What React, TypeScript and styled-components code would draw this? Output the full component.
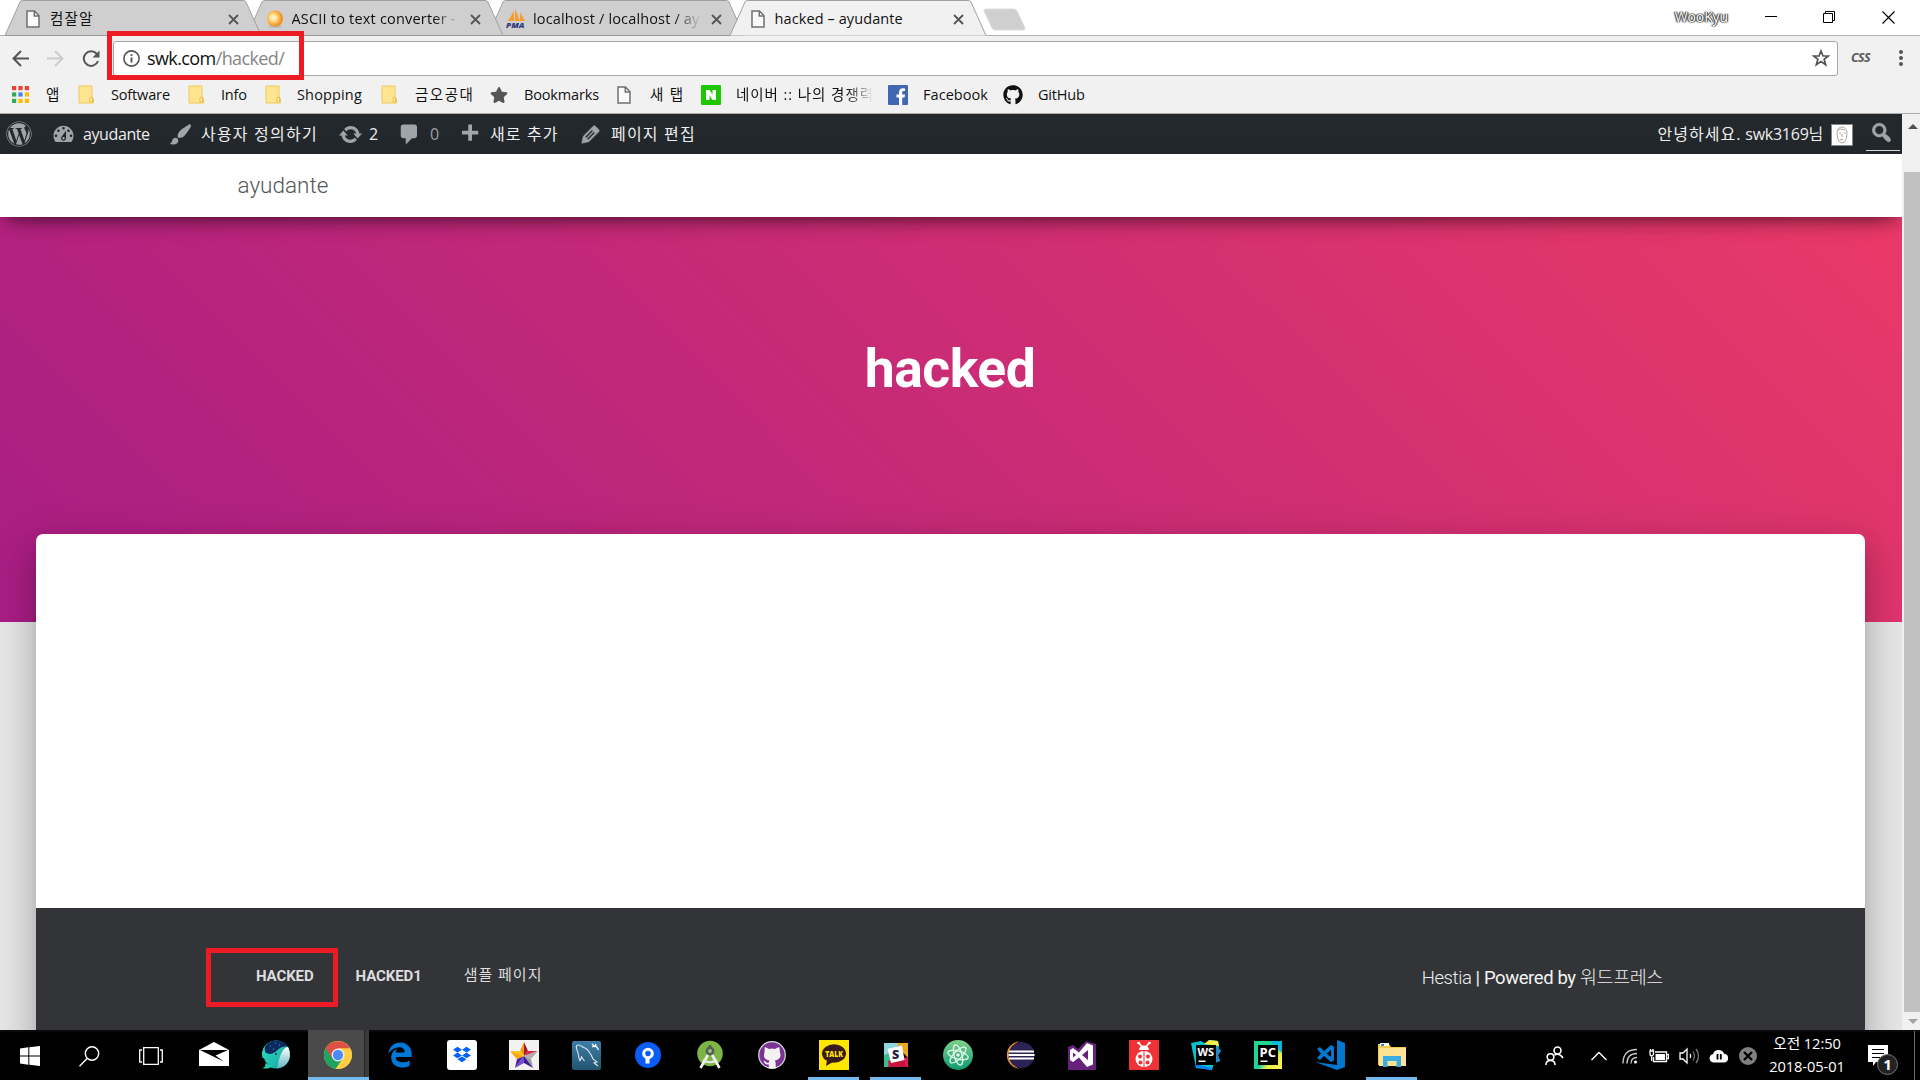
import React from "react";
import styled, { createGlobalStyle, css } from "styled-components";
import { FaWordpress, FaGithub, FaDropbox, FaStar } from "react-icons/fa";
import { FaEdgeLegacy } from "react-icons/fa6";

const UI = `"Open Sans", "Noto Sans CJK KR", sans-serif`;
const WEB = `Roboto, "Noto Sans CJK KR", sans-serif`;

const Global = createGlobalStyle`
  * { box-sizing: border-box; }
  body { margin: 0; overflow: hidden; font-family: ${UI}; }
  svg { display: block; flex: none; }
`;

const Screen = styled.div`
  position: relative;
  width: 1920px;
  height: 1080px;
  overflow: hidden;
  display: grid;
  grid-template-rows: 36px 40px 38px 916px 50px;
  background: #f1f1f1;
`;

const Label = styled.span<{ ls?: number; fade?: boolean; w?: number }>`
  white-space: nowrap;
  overflow: hidden;
  flex: none;
  letter-spacing: ${(p) => p.ls ?? 0}px;
  ${(p) => p.w && css`width: ${p.w}px;`}
  ${(p) => p.fade && css`mask-image: linear-gradient(90deg, #000 calc(100% - 26px), transparent 100%);`}
`;

/* ---------- tab strip ---------- */

const TabStrip = styled.header`
  display: flex;
  align-items: stretch;
  padding-left: 5px;
  background: linear-gradient(#b1b1b1, #b1b1b1) 0 35px / 100% 1px no-repeat, #fff;
`;

const TabBox = styled.div<{ z: number }>`
  position: relative;
  z-index: ${(p) => p.z};
  width: 256px;
  margin-right: -14.5px;
  height: 36px;
  display: flex;
  align-items: center;
  flex: none;
  padding: 1px 22px 0 17px;
  font-size: 14.5px;
  line-height: 36px;
  color: #111;
`;

const TabShape = styled.svg`
  position: absolute;
  inset: 0;
  z-index: -1;
`;

const TabIcon = styled.span`
  display: flex;
  justify-content: center;
  width: 22px;
  margin-right: 6px;
  flex: none;
`;

const TabClose = styled.span`
  margin-left: auto;
  margin-top: 1px;
`;

const NewTab = styled.svg`
  margin-left: 12px;
`;

const WindowControls = styled.div`
  margin-left: auto;
  display: flex;
  align-items: center;
  height: 34px;
  padding-right: 25px;
`;

const UserName = styled.span`
  font-size: 14px;
  color: #fff;
  text-shadow: 0 0 1px #333, 0 0 1px #333, 0 0 2px #333, 1px 0 1px #555, -1px 0 1px #555;
  margin-right: 37px;
  line-height: 32px;
  letter-spacing: -0.1px;
`;

const WinButton = styled.svg<{ gap: number }>`
  margin-right: ${(p) => p.gap}px;
`;

/* ---------- toolbar ---------- */

const Toolbar = styled.div`
  display: flex;
  align-items: center;
  padding: 5px 0 1px 12px;
`;

const NavIcons = styled.div`
  display: flex;
  gap: 18px;
  width: 101px;
`;

const Omnibox = styled.div`
  display: flex;
  align-items: center;
  width: 1725px;
  height: 35px;
  padding: 0 7px 0 9px;
  border: 1px solid #a6a6a6;
  border-radius: 3px;
  background: #fff;
  font-size: 18px;
  line-height: 32px;
  color: #111;
`;

const UrlText = styled.span`
  margin-left: 7px;
  flex: 1;
  letter-spacing: -0.6px;
  em { font-style: normal; color: #858585; }
`;

const CssBadge = styled.span`
  margin-left: 13px;
  width: 48px;
  font: italic 700 12.5px/30px "Noto Sans", sans-serif;
  letter-spacing: -0.6px;
  color: #5a5a5a;
`;

/* ---------- bookmarks ---------- */

const Bookmarks = styled.nav`
  display: flex;
  align-items: center;
  padding: 0 0 0 12px;
  border-bottom: 1px solid #a9abad;
  font-size: 14.5px;
  line-height: 36px;
  color: #111;
`;

const Bookmark = styled.div<{ w: number }>`
  display: flex;
  align-items: center;
  width: ${(p) => p.w}px;
  flex: none;
`;

const BookmarkIcon = styled.span<{ w: number }>`
  width: ${(p) => p.w}px;
  flex: none;
`;

/* ---------- page ---------- */

const Viewport = styled.div`
  display: grid;
  grid-template-columns: 1902px 18px;
  min-height: 0;
`;

const Page = styled.div`
  display: flex;
  flex-direction: column;
  background: #e5e5e5;
  overflow: hidden;
`;

const AdminBar = styled.div`
  display: flex;
  height: 40px;
  flex: none;
  padding-left: 6px;
  background: #23282d;
  color: #eee;
  font-size: 16px;
  line-height: 42px;
`;

const AdminItem = styled.div<{ w: number; gap: number; dim?: boolean }>`
  display: flex;
  align-items: center;
  width: ${(p) => p.w}px;
  gap: ${(p) => p.gap}px;
  flex: none;
  height: 40px;
  color: ${(p) => (p.dim ? "#9a9fa3" : "#eee")};
  svg { color: #a0a5aa; }
`;

const AdminRight = styled.div`
  margin-left: auto;
  display: flex;
  align-items: center;
  height: 40px;
`;

const Avatar = styled.span`
  display: grid;
  place-items: center;
  width: 22px;
  height: 22px;
  margin: 1px 13px 0 8px;
  border: 1px solid #82878c;
  background: #fff;
`;

const SearchBox = styled.span`
  width: 34px;
  height: 36px;
  margin: -2px 2px 0 0;
  padding: 5px 0 0 3px;
  border-bottom: 1px solid #ddd;
  color: #a0a5aa;
`;

const SiteHeader = styled.div`
  position: relative;
  z-index: 1;
  height: 63px;
  flex: none;
  padding-left: 237.500px;
  background: #fff;
  color: #555;
  font: 300 22.5px/62px ${WEB};
  box-shadow: 0 12px 25px -15px rgba(0, 0, 0, 0.42), 0 4px 25px 0 rgba(0, 0, 0, 0.12),
    0 10px 12px -6px rgba(0, 0, 0, 0.25);
`;

const Hero = styled.div`
  height: 405px;
  flex: none;
  background: linear-gradient(45deg, #a81d84 0%, #eb3a67 100%) 0 100% / 100% 468px no-repeat;
  text-align: center;
`;

const HeroTitle = styled.h1`
  margin: 0;
  padding: 122px 2px 0 0;
  color: #fff;
  font: 700 53.5px/60px ${WEB};
  letter-spacing: -0.5px;
`;

const Card = styled.main`
  flex: none;
  width: 1829px;
  height: 600px;
  margin: -88px 0 0 36px;
  border-radius: 7px;
  background: #fff;
  display: grid;
  grid-template-rows: 374px 1fr;
  box-shadow: 0 20px 30px 2px rgba(0, 0, 0, 0.14), 0 8px 38px 6px rgba(0, 0, 0, 0.12),
    0 10px 12px -6px rgba(0, 0, 0, 0.2);
`;

const Footer = styled.footer`
  grid-row: 2;
  display: flex;
  justify-content: space-between;
  padding: 50px 202px 0 220px;
  background: #323437;
  color: #f0f0f0;
  font-family: ${WEB};
`;

const FooterLinks = styled.div`
  display: flex;
  gap: 42px;
  font-size: 15px;
  font-weight: 700;
  line-height: 36px;
  color: #ddd;
  span:last-child { font-weight: 400; line-height: 34px; }
`;

const Credits = styled.div`
  font-size: 18.5px;
  line-height: 40px;
  color: #f4f4f4;
  letter-spacing: -0.4px;
  em { font-style: normal; font-weight: 300; color: #eee; }
`;

const ScrollTrack = styled.div`
  display: flex;
  flex-direction: column;
  align-items: flex-end;
  background: #f1f1f1;
`;

const ScrollButton = styled.div<{ h: number; down?: boolean }>`
  display: flex;
  align-items: center;
  justify-content: center;
  width: 15px;
  height: ${(p) => p.h}px;
  &::before {
    content: "";
    border: 5px solid transparent;
    ${(p) => (p.down ? "border-top-color: #a3a3a3; border-bottom: 0;" : "border-bottom-color: #505050; border-top: 0;")}
  }
`;

const ScrollThumb = styled.div`
  width: 16px;
  height: 840px;
  margin-top: 34px;
  background: #c1c1c1;
`;

const RedFrame = styled.div<{ x: number; y: number; w: number; h: number }>`
  position: absolute;
  z-index: 10;
  left: ${(p) => p.x}px;
  top: ${(p) => p.y}px;
  width: ${(p) => p.w}px;
  height: ${(p) => p.h}px;
  border: 5px solid #ed1c24;
`;

/* ---------- taskbar ---------- */

const Taskbar = styled.footer`
  display: flex;
  background: #000;
  border-top: 2px solid #0a0a0a;
  color: #fff;
`;

const SystemButtons = styled.div`
  display: flex;
  align-items: center;
  width: 183px;
  padding-left: 20px;
  gap: 39px;
`;

const AppCell = styled.div<{ active?: boolean; running?: boolean }>`
  display: flex;
  align-items: center;
  justify-content: center;
  width: 62px;
  height: 50px;
  margin-top: -2px;
  flex: none;
  ${(p) => p.running && css`background: linear-gradient(#76b9ed, #76b9ed) 5px 47px / 51px 3px no-repeat;`}
  ${(p) => p.active && css`
    background: linear-gradient(#76b9ed, #76b9ed) 1px 47px / 61px 3px no-repeat,
      linear-gradient(90deg, transparent 1px, #4a4a4a 1px 57px, #222 57px 58px, #3a3a3a 58px);
  `}
`;

const Tray = styled.div`
  display: flex;
  align-items: center;
  margin-left: auto;
`;

const TrayIcon = styled.svg<{ gap: number }>`
  margin-right: ${(p) => p.gap}px;
`;

const Clock = styled.div`
  width: 76px;
  text-align: center;
  font-size: 14.7px;
  line-height: 23px;
  letter-spacing: -0.1px;
  white-space: nowrap;
  margin-top: -3px;
`;

const ShowDesktop = styled.div`
  width: 6px;
  height: 50px;
  margin-left: 14px;
  border-left: 1px solid #666;
`;

/* ---------- small drawings ---------- */

const Cross = () => (
  <svg width="11" height="11" viewBox="0 0 11 11" stroke="#555" strokeWidth="1.8">
    <path d="M1 1l9 9M10 1l-9 9" />
  </svg>
);

const FileIcon = () => (
  <svg width="14" height="18" viewBox="0 0 14 18" fill="#fafafa" stroke="#707070" strokeWidth="1.5">
    <path d="M1 1h7.5L13 5.8V17H1z" />
    <path d="M8.3 1v5H13" fill="none" />
  </svg>
);

const Folder = () => (
  <svg width="16" height="19" viewBox="0 0 16 19">
    <path d="M1 1h13v11l1.5 1.5V18H1z" fill="#ffe58f" stroke="#efc95c" />
    <path d="M12 17v-4.5h2.5V17z" fill="#fff0b5" stroke="#e9bd48" />
  </svg>
);

const AppsIcon = () => {
  const colors = ["#ea4335", "#ea4335", "#ea4335", "#34a853", "#4285f4", "#fbbc05", "#34a853", "#fbbc05", "#fbbc05"];
  return (
    <svg width="17" height="17" viewBox="0 0 17 17">
      {colors.map((c, i) => (
        <rect key={i} x={(i % 3) * 6.4} y={Math.floor(i / 3) * 6.4} width="4.2" height="4.2" fill={c} />
      ))}
    </svg>
  );
};

const BallIcon = () => (
  <svg width="18" height="18" viewBox="0 0 18 18">
    <defs>
      <radialGradient id="ball" cx=".4" cy=".45" r=".6">
        <stop offset="0" stopColor="#fffbe0" />
        <stop offset=".35" stopColor="#ffdf90" />
        <stop offset=".75" stopColor="#f8a22c" />
        <stop offset="1" stopColor="#e8851c" />
      </radialGradient>
    </defs>
    <ellipse cx="9" cy="16.5" rx="7" ry="1.3" fill="#b8b8b8" />
    <circle cx="9" cy="8.5" r="8" fill="url(#ball)" />
  </svg>
);

const PmaIcon = () => (
  <svg width="20" height="20" viewBox="0 0 20 20">
    <path d="M2 12L8 2v10zM9 12V0l5 12zM14 12V3l5 9z" fill="#f89c2c" />
    <text x="0" y="18.500" fontFamily="Open Sans, sans-serif" fontWeight="800" fontStyle="italic" fontSize="7.500" textLength="18.500" lengthAdjust="spacingAndGlyphs" fill="#333b78">PMA</text>
  </svg>
);

const NaverIcon = () => (
  <svg width="20" height="20" viewBox="0 0 20 20">
    <rect width="20" height="20" rx="1" fill="#1ec800" />
    <path d="M5 5h3.5l3 4.600V5H15v10h-3.500l-3-4.600V15H5z" fill="#fff" />
  </svg>
);

const FacebookIcon = () => (
  <svg width="20" height="20" viewBox="0 0 20 20">
    <rect width="20" height="20" rx="1" fill="#4267b2" />
    <path d="M11 20v-7.500H8.500V9.500H11V7.300C11 4.700 12.500 3.300 15 3.300l2 .1v2.700h-1.400c-1.200 0-1.400.6-1.400 1.500v1.900h2.800l-.4 3h-2.400V20z" fill="#fff" />
  </svg>
);

const dash = {
  gauge:
    "M3.76 16h12.48c1.1-1.37 1.76-3.11 1.76-5 0-4.42-3.58-8-8-8s-8 3.58-8 8c0 1.89.66 3.63 1.76 5zM10 4c.55 0 1 .45 1 1s-.45 1-1 1-1-.45-1-1 .45-1 1-1zM6 6c.55 0 1 .45 1 1s-.45 1-1 1-1-.45-1-1 .45-1 1-1zm8 0c.55 0 1 .45 1 1s-.45 1-1 1-1-.45-1-1 .45-1 1-1zm-5.37 5.55L12 7v6c0 1.1-.9 2-2 2s-2-.9-2-2c0-.57.24-1.08.63-1.45zM4 10c.55 0 1 .45 1 1s-.45 1-1 1-1-.45-1-1 .45-1 1-1zm12 0c.55 0 1 .45 1 1s-.45 1-1 1-1-.45-1-1 .45-1 1-1zm-5 3c0-.55-.45-1-1-1s-1 .45-1 1 .45 1 1 1 1-.45 1-1z",
  brush:
    "M18.33 3.57s.27-.8-.31-1.36c-.53-.52-1.22-.24-1.22-.24-.61.3-5.76 3.47-7.67 5.57-.86.96-2.06 3.79-1.09 4.82.92.98 3.96-.17 4.79-1 2.06-2.06 5.21-7.17 5.5-7.79zM1.4 17.65c2.37-1.56 1.46-3.41 3.23-4.64.93-.65 2.22-.62 3.08.29.63.67.8 2.57-.16 3.46-1.57 1.45-4 1.55-6.15.89z",
  update:
    "M10.2 3.28c3.53 0 6.43 2.61 6.92 6h2.08l-3.5 4-3.5-4h2.32c-.45-1.97-2.21-3.45-4.32-3.45-1.45 0-2.73.71-3.54 1.78L4.95 5.66C6.23 4.2 8.11 3.28 10.2 3.28zm-.4 13.44c-3.52 0-6.43-2.61-6.92-6H.8l3.5-4c1.17 1.33 2.33 2.67 3.5 4H5.48c.45 1.97 2.21 3.45 4.32 3.45 1.45 0 2.73-.71 3.54-1.78l1.71 1.95c-1.28 1.46-3.15 2.38-5.25 2.38z",
  comment: "M5 2h9c1.1 0 2 .9 2 2v7c0 1.1-.9 2-2 2h-2l-5 5v-5H5c-1.1 0-2-.9-2-2V4c0-1.1.9-2 2-2z",
  plus: "M17 7v3h-5v5H9v-5H4V7h5V2h3v5h5z",
  edit:
    "M13.89 3.39l2.71 2.72c.46.46.42 1.24.03 1.64l-8.01 8.02-5.56 1.16 1.16-5.58s7.6-7.63 7.99-8.03c.39-.39 1.22-.39 1.68.07zm-2.73 2.79l-5.59 5.61 1.11 1.11 5.54-5.65zm-2.97 8.23l5.58-5.6-1.07-1.08-5.59 5.6z",
  search:
    "M12.14 4.18c1.87 1.87 2.11 4.75.72 6.89.12.1.22.21.36.31.2.16.47.36.81.59.34.24.56.39.66.47.42.31.73.57.94.78.32.32.6.65.84 1 .25.35.44.69.59 1.04.14.35.21.68.18 1-.02.32-.14.59-.36.81s-.49.34-.81.36c-.31.02-.65-.04-.99-.19-.35-.14-.7-.34-1.04-.59-.35-.24-.68-.52-1-.84-.21-.21-.47-.52-.77-.93-.1-.13-.25-.35-.47-.66-.22-.32-.4-.57-.56-.78-.16-.2-.29-.35-.44-.5-2.07 1.09-4.69.76-6.44-.98-2.14-2.15-2.14-5.64 0-7.78 2.15-2.15 5.63-2.15 7.78 0zm-1.41 6.36c1.36-1.37 1.36-3.58 0-4.95-1.37-1.37-3.59-1.37-4.95 0-1.37 1.37-1.37 3.58 0 4.95 1.36 1.37 3.58 1.37 4.95 0z",
};

const heavy = ["search", "edit"];

const Dashicon = ({ name }: { name: keyof typeof dash }) => (
  <svg width="25" height="25" viewBox="0 0 20 20" fill="currentColor" stroke="currentColor" strokeWidth={heavy.includes(name) ? 0.5 : 0}>
    <path fillRule="evenodd" d={dash[name]} />
  </svg>
);

/* ---------- taskbar app icons (30 × 30) ---------- */

const App30 = ({ children }: { children: React.ReactNode }) => (
  <svg width="30" height="30" viewBox="0 0 30 30">{children}</svg>
);

const MailApp = () => (
  <App30>
    <path d="M0 10L15 2l15 8v16H0z" fill="#fff" />
    <path d="M1 10h28L16.500 15.500l8.500 6.300L1 10z" fill="#000" />
  </App30>
);

const WhaleApp = () => (
  <App30>
    <defs>
      <linearGradient id="whale" x1="0" y1="0" x2="1" y2="1">
        <stop offset="0" stopColor="#30e8c0" />
        <stop offset="1" stopColor="#159aa5" />
      </linearGradient>
      <linearGradient id="belly" x1="0" y1="0" x2="0" y2="1">
        <stop offset="0" stopColor="#fff" />
        <stop offset="1" stopColor="#5fb6c0" />
      </linearGradient>
    </defs>
    <circle cx="15" cy="14.500" r="14" fill="url(#whale)" />
    <path d="M4 11C2 5 9 .5 15 .5c6 0 10 2 12 6-4 0-7 0-11 4-3 3-7 4-9 3-2-.4-3-1-3-2.500z" fill="#0c2a5e" />
    <path d="M27 7c4 8 2 20-11 21.500 1-4 1-7 3-12 2-5 4-9 8-9.500z" fill="url(#belly)" />
    <path d="M0 18h3c1 4 3 6 6 8l2 4H0z" fill="#000" />
    <path d="M1 28c3 0 4-3 3-5l7 3c-2 3-7 3-10 2z" fill="#27cdb3" />
    <circle cx="15" cy="14" r="1" fill="#0c2a5e" />
    <path d="M9 6h1M14 3h1M18 5h1M12 9h1" stroke="#4a90c8" />
  </App30>
);

const ChromeApp = () => (
  <svg width="28" height="28" viewBox="0 0 48 48">
    <circle cx="24" cy="24" r="24" fill="#ffce44" />
    <path d="M24 24L3.200 12A24 24 0 0 0 20 47.700L32 29z" fill="#1da362" />
    <path d="M24 13h20.800A24 24 0 0 0 3.200 12L14 30z" fill="#dd5144" />
    <path d="M20 47.700L32 31l-8-7-10 5z" fill="#1da362" />
    <path d="M34 19l-2 12-12 16.700A24 24 0 0 0 44.800 13H24z" fill="#ffce44" />
    <circle cx="24" cy="24" r="11" fill="#f1f1f1" />
    <circle cx="24" cy="24" r="8.800" fill="#4c8bf5" />
  </svg>
);

const DropboxApp = () => (
  <App30>
    <rect width="30" height="30" rx="3" fill="#fff" />
    <g transform="translate(6 5.500)"><FaDropbox size={18} color="#0061fe" /></g>
  </App30>
);

const StarApp = () => (
  <App30>
    <rect width="30" height="30" fill="#f4f2f0" />
    <path d="M15 16V2l-4 9z" fill="#e8a20c" />
    <path d="M15 16V2l4 9z" fill="#a8172f" />
    <path d="M15 16l4-5 10 0z" fill="#d8304c" />
    <path d="M15 16l14-5-7 8z" fill="#b0b0b0" />
    <path d="M15 16l7 3 2 9z" fill="#9c9c9c" />
    <path d="M15 16l9 12-9-5z" fill="#3a1c90" />
    <path d="M15 16v7l-9 5z" fill="#7a48d8" />
    <path d="M15 16L6 28l2-9z" fill="#4b2499" />
    <path d="M15 16l-7 3-7-8z" fill="#f7a400" />
    <path d="M15 16L1 11h10z" fill="#ffc21c" />
  </App30>
);

const MysqlApp = () => (
  <svg width="29" height="29" viewBox="0 0 29 29">
    <defs>
      <linearGradient id="mysql" x1="0" y1="0" x2="0" y2="1">
        <stop offset="0" stopColor="#3d7ea6" />
        <stop offset="1" stopColor="#23546f" />
      </linearGradient>
    </defs>
    <rect width="29" height="29" rx="2" fill="url(#mysql)" />
    <path d="M8 20c-2-4-1-7-3-11-1-3-1-5 1-5 3 0 4 2 7 3 4 2 6 6 8 11l4 3-3 1 4 3M8 20l1.500-4 3 4" fill="none" stroke="#dce8ee" strokeWidth="1.100" />
    <path d="M20 3l2.500 2.500h2l2 3.500M24 3l-1.500 3M20 6l3-1" fill="none" stroke="#fff" strokeWidth="1.300" />
  </svg>
);

const SourcetreeApp = () => (
  <svg width="26" height="26" viewBox="0 0 26 26">
    <circle cx="13" cy="13" r="13" fill="#0b5cf5" />
    <circle cx="13" cy="11.500" r="4.300" fill="none" stroke="#fff" strokeWidth="3" />
    <rect x="10.500" y="15.500" width="4" height="6" fill="#fff" />
  </svg>
);

const AndroidStudioApp = () => (
  <App30>
    <circle cx="15" cy="13.500" r="12.800" fill="#7db544" />
    <path d="M5.500 28L14 13M24.500 28L16 13" stroke="#f1f1f1" strokeWidth="2.600" />
    <path d="M8 20c4 3 10 3 14 0" fill="none" stroke="#e9e9e9" strokeWidth="2.200" />
    <circle cx="15" cy="11" r="3.200" fill="#9bbf7c" stroke="#546052" strokeWidth="2.500" />
    <path d="M15 5v3" stroke="#546052" strokeWidth="2.500" />
  </App30>
);

const GithubDesktopApp = () => (
  <App30>
    <circle cx="15" cy="15" r="13.300" fill="#7b3494" stroke="#ddd" strokeWidth="1.200" />
    <path d="M8 7l4 2q3-.8 6 0l4-2c1 2 .8 4 .8 5 2.500 6-2 8-5 8.500 1.200 2 1 4 1 8h-7v-4c-3 .5-4-1-5-3-1-1 1-1 2 .2 1 1.500 2 1.200 3 1 0-1 .2-1.600.8-2.200-4-.5-7-3-5-8.500 0-1-.2-3 .4-5z" fill="#f2f2f2" />
  </App30>
);

const KakaoApp = () => (
  <App30>
    <rect width="30" height="30" fill="#ffe600" />
    <ellipse cx="15" cy="13.500" rx="12" ry="9.300" fill="#391b1b" />
    <path d="M8 20l-1 6 7-4z" fill="#391b1b" />
    <text x="6.300" y="16.600" fontFamily="Open Sans, sans-serif" fontWeight="800" fontSize="8" textLength="17.500" lengthAdjust="spacingAndGlyphs" fill="#ffe600">TALK</text>
  </App30>
);

const SlackApp = () => (
  <svg width="24" height="24" viewBox="0 0 24 24">
    <path d="M0 0h13l-8 24H0z" fill="#3eb991" />
    <path d="M0 0h14v7L0 12z" fill="#8fd5dc" />
    <path d="M13 0h11v15L15 5z" fill="#e9a820" />
    <path d="M24 14v10H4l1-6z" fill="#e01765" />
    <path d="M4 18l16-4 2 10H6z" fill="#c9143b" />
    <path d="M3.500 6L18 2.500l2.500 14.500L7 20z" fill="#fff" />
    <text x="8" y="16" fontFamily="Open Sans, sans-serif" fontWeight="800" fontSize="12.500" fill="#2a2340">S</text>
  </svg>
);

const AtomApp = () => (
  <App30>
    <defs>
      <linearGradient id="atom" x1="0" y1="0" x2="0" y2="1">
        <stop offset="0" stopColor="#7fd08a" />
        <stop offset="1" stopColor="#0c9c74" />
      </linearGradient>
    </defs>
    <circle cx="15" cy="15" r="15" fill="url(#atom)" />
    <g fill="none" stroke="#e3f5e8" strokeWidth="1.300">
      <ellipse cx="15" cy="15" rx="10.500" ry="4" transform="rotate(15 15 15)" />
      <ellipse cx="15" cy="15" rx="10.500" ry="4" transform="rotate(75 15 15)" />
      <ellipse cx="15" cy="15" rx="10.500" ry="4" transform="rotate(135 15 15)" />
    </g>
    <circle cx="15" cy="15" r="1.800" fill="#e3f5e8" />
  </App30>
);

const EclipseApp = () => (
  <App30>
    <path d="M14 1.300A13.800 13.800 0 0 0 14 28.700 15.500 15.500 0 0 1 14 1.300z" fill="#f7941e" />
    <circle cx="16.500" cy="15" r="13" fill="#2c2255" />
    <path d="M4 11.500h25M3.500 15h26M4 18.500h25" stroke="#fff" strokeWidth="1.800" />
  </App30>
);

const VisualStudioApp = () => (
  <svg width="28" height="30" viewBox="0 0 28 30">
    <path d="M0 7l5-2 5 4 8-8 10 3v26H0z" fill="#68217a" />
    <path fillRule="evenodd" d="M2 10l3-2 6 4.500L19 3l6 2.500v19L19 27l-8-9.500L5 22l-3-2zm3 2.500v5L8 15zM20 10l-6 5 6 5z" fill="#fff" />
  </svg>
);

const BugApp = () => (
  <App30>
    <rect width="30" height="30" fill="#ef3237" />
    <path d="M10 3l3 4M20 3l-3 4" stroke="#fff" strokeWidth="1.500" />
    <circle cx="9.500" cy="3" r="1.300" fill="#fff" />
    <circle cx="20.500" cy="3" r="1.300" fill="#fff" />
    <path d="M10 10a5 4.500 0 0 1 10 0z" fill="#fff" />
    <ellipse cx="15" cy="19" rx="8.500" ry="8" fill="#fff" />
    <path d="M15 11v16M7 16l-1-3M23 16l1-3M7 23l-2 2M23 23l2 2" stroke="#ef3237" strokeWidth="1" />
    <circle cx="11" cy="16.500" r="2" fill="#ef3237" />
    <circle cx="19" cy="16.500" r="2" fill="#ef3237" />
    <circle cx="11.500" cy="22.500" r="2" fill="#ef3237" />
    <circle cx="18.500" cy="22.500" r="2" fill="#ef3237" />
  </App30>
);

const WebStormApp = () => (
  <App30>
    <path d="M0 3l10-2 5 3 4-4 8 1 1 8 2 2-3 4 2 6-6 2-2 7-16-2z" fill="#07c3d0" />
    <path d="M13 4l5-4 9 1 1 5z" fill="#f7ee4c" />
    <path d="M4 24l17 4-2 2-14-3z" fill="#087cfa" />
    <path d="M24 6l6 4-3 5 2 6-5 2z" fill="#2489c8" />
    <rect x="5" y="5" width="20" height="20" fill="#000" />
    <text x="6.500" y="16" fontFamily="Open Sans, sans-serif" fontWeight="700" fontSize="11" textLength="16.500" lengthAdjust="spacingAndGlyphs" fill="#fff">WS</text>
    <rect x="7.500" y="20.500" width="7" height="1.500" fill="#fff" />
  </App30>
);

const PyCharmApp = () => (
  <svg width="28" height="28" viewBox="0 0 28 28">
    <defs>
      <linearGradient id="pc" x1="0" y1="0" x2="1" y2="1">
        <stop offset="0" stopColor="#21d789" />
        <stop offset=".55" stopColor="#1fd19b" />
        <stop offset=".7" stopColor="#e8ee4a" />
        <stop offset="1" stopColor="#fcf84a" />
      </linearGradient>
    </defs>
    <rect width="28" height="28" fill="url(#pc)" />
    <path d="M16 0h12v12z" fill="#08b9dd" />
    <rect x="4" y="4" width="20" height="20" fill="#000" />
    <text x="5.500" y="15.500" fontFamily="Open Sans, sans-serif" fontWeight="700" fontSize="12" textLength="16.500" lengthAdjust="spacingAndGlyphs" fill="#fff">PC</text>
    <rect x="6.500" y="19.500" width="7" height="1.500" fill="#fff" />
  </svg>
);

const VsCodeApp = () => (
  <App30>
    <path d="M22 0l8 3v24l-8 3L0 22l22 3z" fill="#0078d0" />
    <path fillRule="evenodd" d="M2 9l3-2 4 4 7-6 3 1.500v14L16 22l-7-6-4 4-3-2 4-4.500zm14 1l-4.500 3.500L16 17z" fill="#0078d0" />
    <path d="M19.500 5h2.500v19h-2.500z" fill="#000" />
  </App30>
);

const ExplorerApp = () => (
  <svg width="28" height="26" viewBox="0 0 28 26">
    <path d="M0 2h11l2 3h15v18H0z" fill="#f5c94b" />
    <path d="M1 6h27v18H1z" fill="#ffe394" />
    <path d="M2 1h9v3H2z" fill="#fff" />
    <path d="M3 2h3v2H3z" fill="#2a8fd0" />
    <path d="M5 25V14h18v11h-4.500v-6h-9v6z" fill="#38ace0" />
  </svg>
);

const apps: { icon: React.ReactNode; active?: boolean; running?: boolean }[] = [
  { icon: <MailApp /> },
  { icon: <WhaleApp /> },
  { icon: <ChromeApp />, active: true },
  { icon: <FaEdgeLegacy size={26} color="#0078d7" /> },
  { icon: <DropboxApp /> },
  { icon: <StarApp /> },
  { icon: <MysqlApp /> },
  { icon: <SourcetreeApp /> },
  { icon: <AndroidStudioApp /> },
  { icon: <GithubDesktopApp /> },
  { icon: <KakaoApp />, running: true },
  { icon: <SlackApp />, running: true },
  { icon: <AtomApp /> },
  { icon: <EclipseApp /> },
  { icon: <VisualStudioApp /> },
  { icon: <BugApp /> },
  { icon: <WebStormApp /> },
  { icon: <PyCharmApp /> },
  { icon: <VsCodeApp /> },
  { icon: <ExplorerApp />, running: true },
];

const tabs = [
  { title: "컴잘알", icon: <FileIcon />, w: 160, z: 4, ls: 1.1 },
  { title: "ASCII to text converter - ", icon: <BallIcon />, w: 168, z: 3, ls: 0.2 },
  { title: "localhost / localhost / ay", icon: <PmaIcon />, w: 168, z: 2, ls: 0.15 },
  { title: "hacked – ayudante", icon: <FileIcon />, w: 168, z: 5, ls: 0.1, current: true },
];

const bookmarks = [
  { title: "앱", icon: <AppsIcon />, iw: 34, w: 66, ls: 0 },
  { title: "Software", icon: <Folder />, iw: 33, w: 110, ls: -0.15 },
  { title: "Info", icon: <Folder />, iw: 33, w: 77, ls: -0.2 },
  { title: "Shopping", icon: <Folder />, iw: 32, w: 116, ls: 0.15 },
  { title: "금오공대", icon: <Folder />, iw: 34, w: 109, ls: 1.5 },
  { title: "Bookmarks", icon: <FaStar size={18} color="#555" />, iw: 34, w: 127, ls: -0.15 },
  { title: "새 탭", icon: <FileIcon />, iw: 33, w: 84, ls: 1.3 },
  { title: "네이버 :: 나의 경쟁력", icon: <NaverIcon />, iw: 35, w: 187, ls: 0.95, cut: 137 },
  { title: "Facebook", icon: <FacebookIcon />, iw: 35, w: 115, ls: 0.05 },
  { title: "GitHub", icon: <FaGithub size={20} color="#111" />, iw: 35, w: 100, ls: -0.2 },
];

export default function App() {
  return (
    <Screen>
      <Global />
      <TabStrip>
        {tabs.map((t) => (
          <TabBox key={t.title} z={t.z}>
            <TabShape width="256" height="36" viewBox="0 0 256 36">
              <path
                d="M0 35.500L15 2Q16 .5 18 .5H238Q240 .5 241 2L256 35.500"
                fill={t.current ? "#f1f1f1" : "#cfcfcf"}
                stroke="#a0a0a0"
              />
              {!t.current && <path d="M0 35.500H256" stroke="#999" />}
            </TabShape>
            <TabIcon>{t.icon}</TabIcon>
            <Label ls={t.ls} w={t.w} fade={t.z < 4}>{t.title}</Label>
            <TabClose><Cross /></TabClose>
          </TabBox>
        ))}
        <NewTab width="44" height="32" viewBox="0 0 44 32">
          <path d="M2 9h29q2 0 3 2l8 17q0 2-2 2H12q-2 0-3-2L1 11q0-2 1-2z" fill="#cfcfcf" stroke="#ddd" />
        </NewTab>
        <WindowControls>
          <UserName>WooKyu</UserName>
          <WinButton gap={46} width="12" height="12" stroke="#000"><path d="M0 5.500h12" /></WinButton>
          <WinButton gap={47} width="12" height="12" stroke="#000" fill="none">
            <path d="M.5 2.500h9v9h-9zM2.500 2V.5h9v9H10" />
          </WinButton>
          <WinButton gap={0} width="13" height="13" stroke="#000" strokeWidth="1.200"><path d="M.5 .5l12 12M12.500 .5l-12 12" /></WinButton>
        </WindowControls>
      </TabStrip>

      <Toolbar>
        <NavIcons>
          <svg width="17" height="17" viewBox="0 0 17 17" fill="none" stroke="#555" strokeWidth="2"><path d="M17 8.500H2M9 1L1.500 8.500 9 16" /></svg>
          <svg width="17" height="17" viewBox="0 0 17 17" fill="none" stroke="#ccc" strokeWidth="2"><path d="M0 8.500h15M8 1l7.500 7.500L8 16" /></svg>
          <svg width="18" height="17" viewBox="0 0 18 17" fill="none" stroke="#555" strokeWidth="2">
            <path d="M14.800 4A7.300 7.300 0 1 0 16 11" />
            <path d="M17.500 .5v7h-7z" fill="#555" stroke="none" />
          </svg>
        </NavIcons>
        <Omnibox>
          <svg width="17" height="17" viewBox="0 0 17 17" fill="none" stroke="#555" strokeWidth="1.600">
            <circle cx="8.500" cy="8.500" r="7.600" />
            <path d="M8.500 7.500v5M8.500 4.300v1.800" strokeWidth="1.900" />
          </svg>
          <UrlText>swk.com<em>/hacked/</em></UrlText>
          <svg width="18" height="18" viewBox="0 0 18 18" fill="none" stroke="#555" strokeWidth="1.700">
            <path d="M9 2l2 5h5.300l-4.200 3.300 1.600 5.400L9 12.500l-4.700 3.200 1.600-5.400L1.700 7H7z" />
          </svg>
        </Omnibox>
        <CssBadge>CSS</CssBadge>
        <svg width="4" height="18" viewBox="0 0 4 18" fill="#555">
          <circle cx="2" cy="3" r="2" /><circle cx="2" cy="9" r="2" /><circle cx="2" cy="15" r="2" />
        </svg>
      </Toolbar>

      <Bookmarks>
        {bookmarks.map((b) => (
          <Bookmark key={b.title} w={b.w}>
            <BookmarkIcon w={b.iw}>{b.icon}</BookmarkIcon>
            <Label ls={b.ls} w={b.cut} fade={!!b.cut}>{b.title}</Label>
          </Bookmark>
        ))}
      </Bookmarks>

      <Viewport>
        <Page>
          <AdminBar>
            <AdminItem w={45} gap={0}><FaWordpress size={26} /></AdminItem>
            <AdminItem w={117} gap={7}><Dashicon name="gauge" /><Label ls={-0.4}>ayudante</Label></AdminItem>
            <AdminItem w={170} gap={8}><Dashicon name="brush" /><Label ls={1.2}>사용자 정의하기</Label></AdminItem>
            <AdminItem w={59} gap={6}><Dashicon name="update" /><Label>2</Label></AdminItem>
            <AdminItem w={60} gap={8} dim><Dashicon name="comment" /><Label>0</Label></AdminItem>
            <AdminItem w={121} gap={8}><Dashicon name="plus" /><Label ls={1.1}>새로 추가</Label></AdminItem>
            <AdminItem w={140} gap={8}><Dashicon name="edit" /><Label ls={1.2}>페이지 편집</Label></AdminItem>
            <AdminRight>
              <Label ls={1}>안녕하세요. </Label>
              <Label ls={-0.25}>&nbsp;swk3169님</Label>
              <Avatar>
                <svg width="14" height="18" viewBox="0 0 14 18" fill="none" stroke="#aaa">
                  <path d="M2 6Q3 1 7 1t5 5l-.5 6Q10 17 7 17T2.500 12zM4 7h2M8.500 7h2M7 8v3M5 13.500h3M3 4l3-1 4 1" />
                </svg>
              </Avatar>
              <SearchBox><Dashicon name="search" /></SearchBox>
            </AdminRight>
          </AdminBar>
          <SiteHeader>ayudante</SiteHeader>
          <Hero><HeroTitle>hacked</HeroTitle></Hero>
          <Card>
            <Footer>
              <FooterLinks>
                <Label ls={-0.1}>HACKED</Label>
                <Label ls={-0.1}>HACKED1</Label>
                <Label ls={1}>샘플 페이지</Label>
              </FooterLinks>
              <Credits><em>Hestia</em> | Powered by <em>워드프레스</em></Credits>
            </Footer>
          </Card>
        </Page>
        <ScrollTrack>
          <ScrollButton h={24} />
          <ScrollThumb />
          <ScrollButton h={18} down />
        </ScrollTrack>
      </Viewport>

      <Taskbar>
        <SystemButtons>
          <svg width="20" height="20" viewBox="0 0 20 20" fill="#fff">
            <path d="M0 2.500l8.300-1.200v8.200H0zM9.300 1.200L20 0v9.500H9.300zM0 10.500h8.300v8.200L0 17.500zM9.300 10.500H20V20L9.300 18.800z" />
          </svg>
          <svg width="21" height="21" viewBox="0 0 21 21" fill="none" stroke="#fff" strokeWidth="1.400">
            <circle cx="13" cy="7.500" r="6.700" /><path d="M8.300 12.300L.5 20.300" />
          </svg>
          <svg width="24" height="18" viewBox="0 0 24 18" fill="none" stroke="#fff" strokeWidth="1.300">
            <path d="M4.700 .7h14.600v16.600H4.700zM3 3H.7v12H3M21 3h2.300v12H21" />
          </svg>
        </SystemButtons>
        {apps.map((a, i) => (
          <AppCell key={i} active={a.active} running={a.running}>{a.icon}</AppCell>
        ))}
        <Tray>
          <TrayIcon gap={27} width="19" height="20" viewBox="0 0 19 20" fill="none" stroke="#fff" strokeWidth="1.600">
            <circle cx="12.500" cy="4.500" r="3.500" /><circle cx="5.500" cy="11" r="3.300" />
            <path d="M1 19q0-4.500 4.500-4.500T10 19M9.500 9q5-2.500 8.500 3" />
          </TrayIcon>
          <TrayIcon gap={15} width="16" height="10" fill="none" stroke="#fff" strokeWidth="1.400"><path d="M.5 9L8 1.500 15.500 9" /></TrayIcon>
          <TrayIcon gap={11} width="16" height="16" fill="none" strokeWidth="1.300">
            <path d="M1 15.500Q1 1.500 15 1.500M5 15.500Q5 5.500 15 5.500M9 15.500Q9 9.500 15 9.500" stroke="#ccc" />
            <circle cx="13.500" cy="14" r="1.500" fill="#fff" />
          </TrayIcon>
          <TrayIcon gap={10} width="20" height="15" fill="none" stroke="#fff" strokeWidth="1.300">
            <path d="M6 3h11.500v9.500H4.500V8M18 5.500h1.500v4H18" /><path d="M6.500 5H16v6H6.500z" fill="#fff" stroke="none" />
            <path d="M1 2v3q0 2 1.500 2T4.500 5V2zM1.500 0v2M4 0v2M2.700 7v5" />
          </TrayIcon>
          <TrayIcon gap={9} width="21" height="18" fill="none" stroke="#fff" strokeWidth="1.300">
            <path d="M1 6h3l4-4v14l-4-4H1z" /><path d="M11 7q1.500 2 0 4" /><path d="M14 4.500q3 4.500 0 9M17 2q5 7 0 14" stroke="#777" />
          </TrayIcon>
          <TrayIcon gap={10} width="20" height="14" viewBox="0 0 20 14">
            <path d="M4.500 13.500a4.200 4.200 0 0 1-.6-8.300A6 6 0 0 1 15.200 4.800a4.400 4.400 0 0 1 .3 8.700z" fill="#fff" />
            <path d="M8.500 5v5.500M11.800 5v5.500" stroke="#000" strokeWidth="1.800" />
          </TrayIcon>
          <TrayIcon gap={12} width="18" height="18"><circle cx="9" cy="9" r="9" fill="#808080" /><path d="M5 5l8 8M13 5l-8 8" stroke="#000" strokeWidth="2.200" /></TrayIcon>
          <Clock>오전 12:50<br />2018-05-01</Clock>
          <TrayIcon gap={1} width="54" height="40" viewBox="0 0 54 40">
            <path d="M23 9h20v17H31l-3 4v-4h-5z" fill="#fff" />
            <path d="M27 13.500h12M27 17.500h12M27 21.500h8" stroke="#000" />
            <circle cx="42.500" cy="28.500" r="10" fill="#222" stroke="#777" />
            <text x="42.500" y="34" textAnchor="middle" fontFamily="Open Sans, sans-serif" fontWeight="700" fontSize="15" fill="#fff">1</text>
          </TrayIcon>
          <ShowDesktop />
        </Tray>
      </Taskbar>

      <RedFrame x={107} y={31} w={197} h={49} />
      <RedFrame x={206} y={948} w={132} h={59} />
    </Screen>
  );
}
